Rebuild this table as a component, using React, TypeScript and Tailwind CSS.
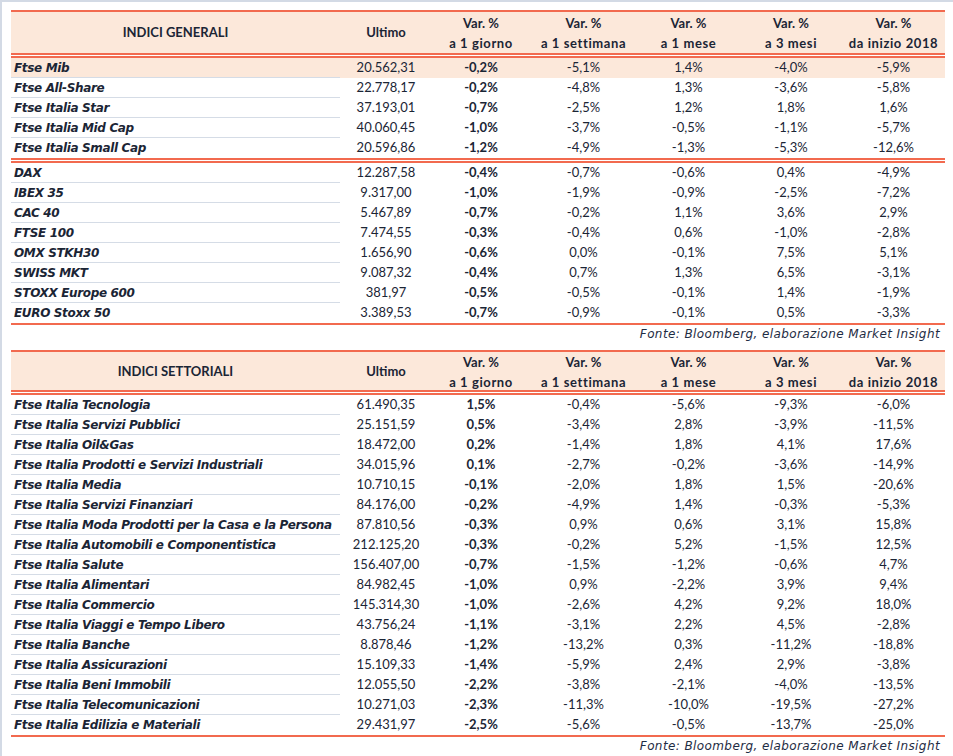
import React from 'react';

type Row = { name: string; values: string[]; highlight?: boolean };

const cols = 'grid grid-cols-[329px_92px_98px_107px_103px_102px_103px]';

const generali: Row[][] = [
    [
        { name: 'Ftse Mib', values: ['20.562,31', '-0,2%', '-5,1%', '1,4%', '-4,0%', '-5,9%'], highlight: true },
        { name: 'Ftse All-Share', values: ['22.778,17', '-0,2%', '-4,8%', '1,3%', '-3,6%', '-5,8%'] },
        { name: 'Ftse Italia Star', values: ['37.193,01', '-0,7%', '-2,5%', '1,2%', '1,8%', '1,6%'] },
        { name: 'Ftse Italia Mid Cap', values: ['40.060,45', '-1,0%', '-3,7%', '-0,5%', '-1,1%', '-5,7%'] },
        { name: 'Ftse Italia Small Cap', values: ['20.596,86', '-1,2%', '-4,9%', '-1,3%', '-5,3%', '-12,6%'] },
    ],
    [
        { name: 'DAX', values: ['12.287,58', '-0,4%', '-0,7%', '-0,6%', '0,4%', '-4,9%'] },
        { name: 'IBEX 35', values: ['9.317,00', '-1,0%', '-1,9%', '-0,9%', '-2,5%', '-7,2%'] },
        { name: 'CAC 40', values: ['5.467,89', '-0,7%', '-0,2%', '1,1%', '3,6%', '2,9%'] },
        { name: 'FTSE 100', values: ['7.474,55', '-0,3%', '-0,4%', '0,6%', '-1,0%', '-2,8%'] },
        { name: 'OMX STKH30', values: ['1.656,90', '-0,6%', '0,0%', '-0,1%', '7,5%', '5,1%'] },
        { name: 'SWISS MKT', values: ['9.087,32', '-0,4%', '0,7%', '1,3%', '6,5%', '-3,1%'] },
        { name: 'STOXX Europe 600', values: ['381,97', '-0,5%', '-0,5%', '-0,1%', '1,4%', '-1,9%'] },
        { name: 'EURO Stoxx 50', values: ['3.389,53', '-0,7%', '-0,9%', '-0,1%', '0,5%', '-3,3%'] },
    ],
];

const settoriali: Row[][] = [
    [
        { name: 'Ftse Italia Tecnologia', values: ['61.490,35', '1,5%', '-0,4%', '-5,6%', '-9,3%', '-6,0%'] },
        { name: 'Ftse Italia Servizi Pubblici', values: ['25.151,59', '0,5%', '-3,4%', '2,8%', '-3,9%', '-11,5%'] },
        { name: 'Ftse Italia Oil&Gas', values: ['18.472,00', '0,2%', '-1,4%', '1,8%', '4,1%', '17,6%'] },
        { name: 'Ftse Italia Prodotti e Servizi Industriali', values: ['34.015,96', '0,1%', '-2,7%', '-0,2%', '-3,6%', '-14,9%'] },
        { name: 'Ftse Italia Media', values: ['10.710,15', '-0,1%', '-2,0%', '1,8%', '1,5%', '-20,6%'] },
        { name: 'Ftse Italia Servizi Finanziari', values: ['84.176,00', '-0,2%', '-4,9%', '1,4%', '-0,3%', '-5,3%'] },
        { name: 'Ftse Italia Moda Prodotti per la Casa e la Persona', values: ['87.810,56', '-0,3%', '0,9%', '0,6%', '3,1%', '15,8%'] },
        { name: 'Ftse Italia Automobili e Componentistica', values: ['212.125,20', '-0,3%', '-0,2%', '5,2%', '-1,5%', '12,5%'] },
        { name: 'Ftse Italia Salute', values: ['156.407,00', '-0,7%', '-1,5%', '-1,2%', '-0,6%', '4,7%'] },
        { name: 'Ftse Italia Alimentari', values: ['84.982,45', '-1,0%', '0,9%', '-2,2%', '3,9%', '9,4%'] },
        { name: 'Ftse Italia Commercio', values: ['145.314,30', '-1,0%', '-2,6%', '4,2%', '9,2%', '18,0%'] },
        { name: 'Ftse Italia Viaggi e Tempo Libero', values: ['43.756,24', '-1,1%', '-3,1%', '2,2%', '4,5%', '-2,8%'] },
        { name: 'Ftse Italia Banche', values: ['8.878,46', '-1,2%', '-13,2%', '0,3%', '-11,2%', '-18,8%'] },
        { name: 'Ftse Italia Assicurazioni', values: ['15.109,33', '-1,4%', '-5,9%', '2,4%', '2,9%', '-3,8%'] },
        { name: 'Ftse Italia Beni Immobili', values: ['12.055,50', '-2,2%', '-3,8%', '-2,1%', '-4,0%', '-13,5%'] },
        { name: 'Ftse Italia Telecomunicazioni', values: ['10.271,03', '-2,3%', '-11,3%', '-10,0%', '-19,5%', '-27,2%'] },
        { name: 'Ftse Italia Edilizia e Materiali', values: ['29.431,97', '-2,5%', '-5,6%', '-0,5%', '-13,7%', '-25,0%'] },
    ],
];

const periods = ['a 1 giorno', 'a 1 settimana', 'a 1 mese', 'a 3 mesi', 'da inizio 2018'];

function DoubleRule() {
    return (
        <div>
            <div className="h-[2px] bg-[#f26a4f]"></div>
            <div className="h-px"></div>
            <div className="h-[2px] bg-[#f26a4f]"></div>
        </div>
    );
}

function DataTable({ title, groups, headerHeight }: { title: string; groups: Row[][]; headerHeight: string }) {
    return (
        <div className="w-[934px]">
            <div className="h-[2px] bg-[#f26a4f]"></div>
            <div className={`${cols} ${headerHeight} bg-[#fce8da] font-bold text-[13px] text-[#1b2535]`}>
                <div className="flex items-center justify-center">{title}</div>
                <div className="flex items-center justify-center">Ultimo</div>
                {periods.map((p) => (
                    <div key={p} className="flex flex-col items-center justify-center leading-[20px]">
                        <span>Var. %</span>
                        <span className="tracking-[0.6px]">{p}</span>
                    </div>
                ))}
            </div>
            {groups.map((group, gi) => (
                <div key={gi}>
                    <DoubleRule />
                    {group.map((row, ri) => {
                        const last = ri === group.length - 1;
                        return (
                            <div key={row.name} className={`${cols} text-[13px] leading-[19px] text-[#1b2535] ${row.highlight ? 'bg-[#fce8da]' : ''}`}>
                                <div className={`pl-[3px] h-[20px] leading-[21px] font-bold italic whitespace-nowrap font-['DejaVu_Sans',sans-serif] text-[12px] tracking-[-0.35px] ${last ? '' : 'border-b border-[#d5dce6]'}`}>
                                    {row.name}
                                </div>
                                {row.values.map((v, vi) => (
                                    <div key={vi} className={`h-[20px] text-center ${vi === 1 ? 'font-bold' : ''}`}>
                                        {v}
                                    </div>
                                ))}
                            </div>
                        );
                    })}
                </div>
            ))}
            <div className="h-[2px] bg-[#f26a4f]"></div>
            <p className="text-right pr-[5px] italic font-['DejaVu_Sans',sans-serif] text-[12px] tracking-[0.4px] leading-[18px] text-[#1f2d44]">
                Fonte: Bloomberg, elaborazione Market Insight
            </p>
        </div>
    );
}

export default function App() {
    return (
        <div className="w-[953px] h-[756px] overflow-hidden bg-white border-t-2 border-l-2 border-[#d3dae5] pt-2 pl-[9px] font-['Lato','Liberation_Sans',sans-serif]">
            <DataTable title="INDICI GENERALI" groups={generali} headerHeight="h-[41px]" />
            <div className="h-[7px]"></div>
            <DataTable title="INDICI SETTORIALI" groups={settoriali} headerHeight="h-[38px]" />
        </div>
    );
}
